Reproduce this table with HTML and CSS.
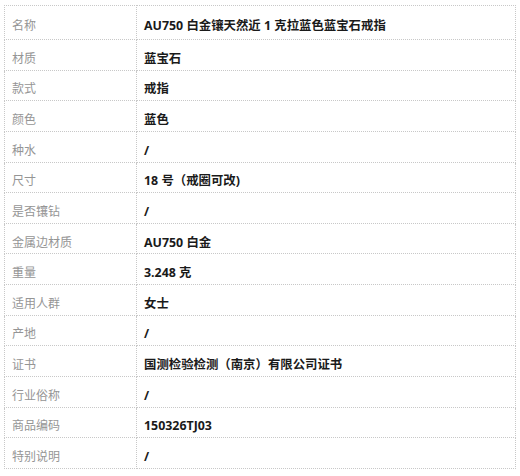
FILE: index.html
```html
<!DOCTYPE html>
<html lang="zh">
<head>
<meta charset="utf-8">
<title>商品参数</title>
<link rel="stylesheet" href="styles.css">
</head>
<body>
<table class="spec">
  <tbody>
    <tr class="first"><td class="label">名称</td><td class="value">AU750 白金镶天然近 1 克拉蓝色蓝宝石戒指</td></tr>
    <tr><td class="label">材质</td><td class="value">蓝宝石</td></tr>
    <tr><td class="label">款式</td><td class="value">戒指</td></tr>
    <tr><td class="label">颜色</td><td class="value">蓝色</td></tr>
    <tr><td class="label">种水</td><td class="value">/</td></tr>
    <tr><td class="label">尺寸</td><td class="value">18 号（戒圈可改)</td></tr>
    <tr><td class="label">是否镶钻</td><td class="value">/</td></tr>
    <tr><td class="label">金属边材质</td><td class="value">AU750 白金</td></tr>
    <tr><td class="label">重量</td><td class="value">3.248 克</td></tr>
    <tr><td class="label">适用人群</td><td class="value">女士</td></tr>
    <tr><td class="label">产地</td><td class="value">/</td></tr>
    <tr><td class="label">证书</td><td class="value">国测检验检测（南京）有限公司证书</td></tr>
    <tr><td class="label">行业俗称</td><td class="value">/</td></tr>
    <tr><td class="label">商品编码</td><td class="value">150326TJ03</td></tr>
    <tr><td class="label">特别说明</td><td class="value">/</td></tr>
  </tbody>
</table>
</body>
</html>
```
FILE: styles.css
```css
html, body {
  margin: 0;
  padding: 0;
  background: #ffffff;
}
body {
  padding: 5px 0 0 4px;
  font-family: "Open Sans", "Noto Sans CJK SC", sans-serif;
  font-size: 12px;
}
.spec {
  border-collapse: collapse;
  width: 512px;
  table-layout: fixed;
}
.spec td {
  border: 1px dotted #c8c8c8;
  height: 30.64px;
  box-sizing: border-box;
  padding: 0 7px;
  line-height: 16px;
  vertical-align: middle;
  padding-top: 8px;
}
.spec tr.first td {
  height: 34px;
  padding-top: 6px;
}
.spec td.label {
  width: 132px;
  color: #959595;
}
.spec td.value {
  color: #1a1a1a;
  font-weight: bold;
  font-size: 12.4px;
}
```
